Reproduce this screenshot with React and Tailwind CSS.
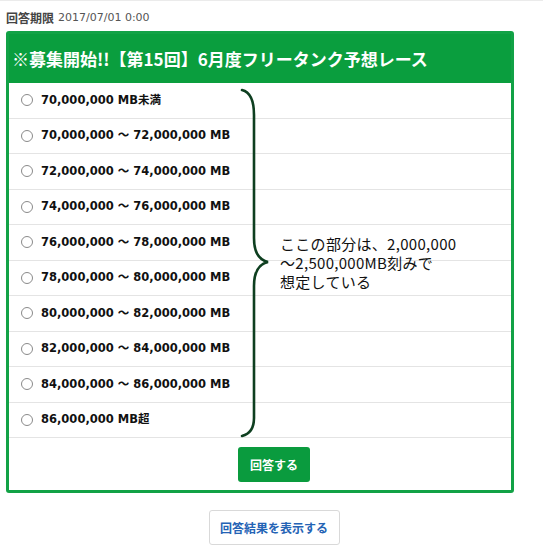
import React from 'react'

const options = [
  '70,000,000 MB未満',
  '70,000,000 ～ 72,000,000 MB',
  '72,000,000 ～ 74,000,000 MB',
  '74,000,000 ～ 76,000,000 MB',
  '76,000,000 ～ 78,000,000 MB',
  '78,000,000 ～ 80,000,000 MB',
  '80,000,000 ～ 82,000,000 MB',
  '82,000,000 ～ 84,000,000 MB',
  '84,000,000 ～ 86,000,000 MB',
  '86,000,000 MB超',
]

const jp = { fontFamily: '"Noto Sans CJK JP", "Noto Sans", sans-serif' }
const num = { fontFamily: '"DejaVu Sans", "Noto Sans CJK JP", sans-serif' }

// curly brace + note drawn over the option list
const Annotation = () => (
  <div className="pointer-events-none absolute left-0 top-0 h-full w-full">
    <svg className="absolute left-0 top-0" width="300" height="440" viewBox="0 0 300 440">
      <path
        d="M242 90 C250 92 254 100 254 115 L254 238 C254 252 259 260 268 262 C259 264 254 272 254 286 L254 418 C254 428 250 434 242 436"
        fill="none"
        stroke="#0e3f20"
        strokeWidth="2.6"
        strokeLinecap="round"
      />
    </svg>
    <div className="absolute left-[280px] top-[234px] text-[15px] leading-[19px] tracking-[0.3px] text-[#111]" style={jp}>
      <div>ここの部分は、2,000,000</div>
      <div>～2,500,000MB刻みで</div>
      <div>想定している</div>
    </div>
  </div>
)

export default function App() {
  return (
    <div className="relative w-[551px] h-[554px] bg-white overflow-hidden">
      <div className="h-px w-[543px] bg-[#ebebeb]"></div>

      <div className="flex items-center pl-[6px] pt-[9px] h-[25px] text-[#555]">
        <span className="text-[12px] font-bold text-[#444]" style={jp}>回答期限</span>
        <span className="ml-[4px] text-[11px]" style={num}>2017/07/01 0:00</span>
      </div>

      <div className="ml-[6px] mt-[5px] w-[508px] rounded-[3px] border-[3px] border-[#12a246] bg-white">
        <div className="flex h-[49px] items-center bg-[#0a9e3e] pl-[3px] text-[17px] font-bold text-white" style={jp}>
          ※募集開始!!【第15回】6月度フリータンク予想レース
        </div>

        <div className="relative">
          {options.map((o) => (
            <div key={o} className="flex h-[35.5px] items-center border-b border-[#e4e4e4] pl-[12px]">
              <span className="h-[12px] w-[12px] rounded-full border border-[#8a8a8a] bg-white"></span>
              <span className="ml-[8px] text-[11.5px] font-bold text-[#111]" style={num}>
                {o}
              </span>
            </div>
          ))}
        </div>

        <div className="flex h-[52px] items-start justify-center pl-[28px] pt-[9px]">
          <button className="h-[35px] w-[72px] rounded-[3px] bg-[#0a9b3e] text-[12px] font-bold text-white" style={jp}>
            回答する
          </button>
        </div>
      </div>

      <div className="flex w-[548px] justify-center pt-[17px]">
        <button className="h-[35px] w-[131px] rounded-[3px] border border-[#d9d9d9] bg-white text-[12px] font-bold text-[#2463b5]" style={jp}>
          回答結果を表示する
        </button>
      </div>

      <Annotation />
    </div>
  )
}
